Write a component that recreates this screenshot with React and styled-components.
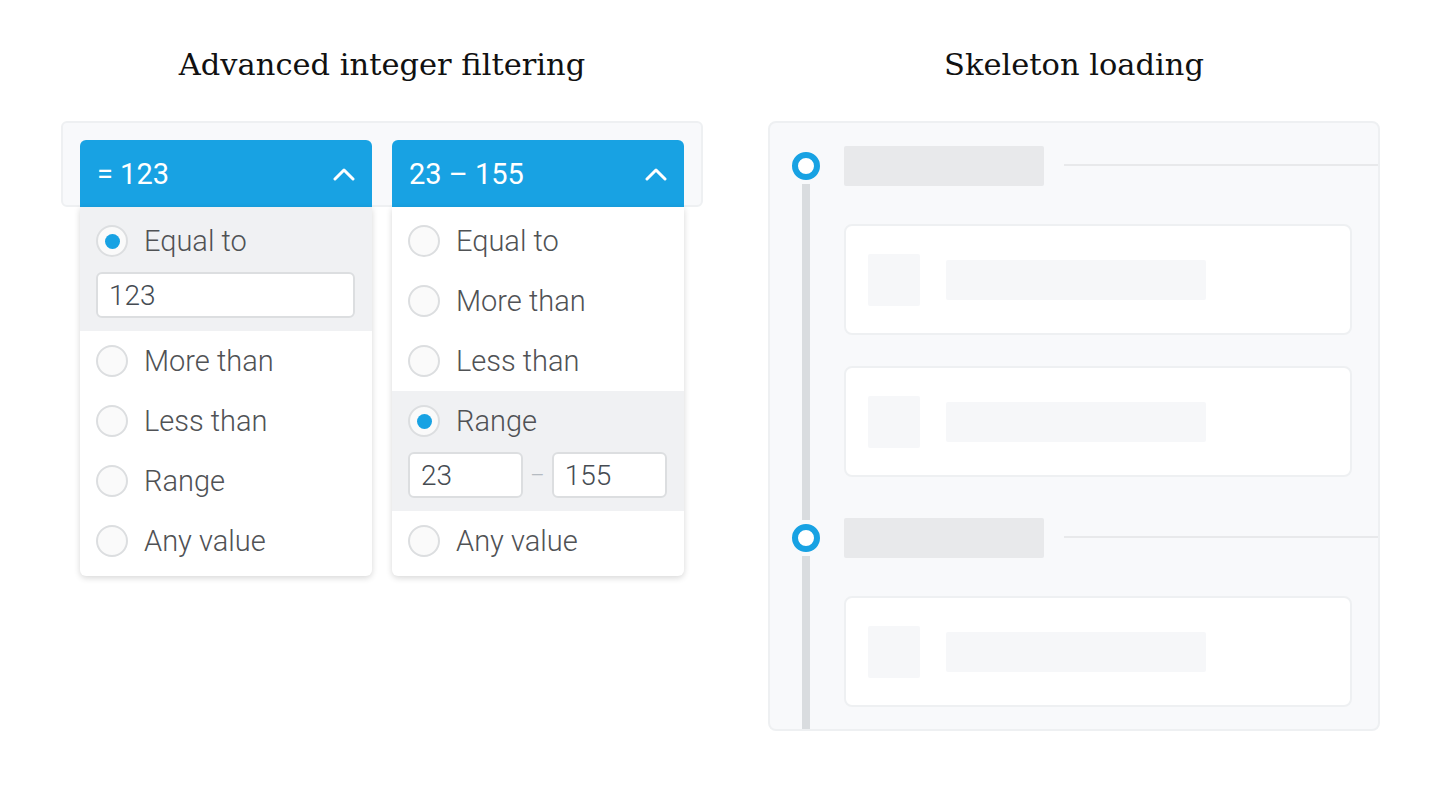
import React from 'react';
import styled, { createGlobalStyle } from 'styled-components';

const BLUE = '#18a2e3';

const GlobalStyle = createGlobalStyle`
  body {
    margin: 0;
    background: #fff;
    font-family: Roboto, "Liberation Sans", sans-serif;
  }
  * { box-sizing: border-box; }
`;

const filters = [
  {
    label: '= 123',
    active: 'equal',
    options: [
      { key: 'equal', text: 'Equal to', values: ['123'] },
      { key: 'more', text: 'More than' },
      { key: 'less', text: 'Less than' },
      { key: 'range', text: 'Range' },
      { key: 'any', text: 'Any value' },
    ],
  },
  {
    label: '23 – 155',
    active: 'range',
    options: [
      { key: 'equal', text: 'Equal to' },
      { key: 'more', text: 'More than' },
      { key: 'less', text: 'Less than' },
      { key: 'range', text: 'Range', values: ['23', '155'] },
      { key: 'any', text: 'Any value' },
    ],
  },
];

const Chevron = () => (
  <svg width="22" height="14" viewBox="0 0 22 14">
    <polyline points="2,12 11,3 20,12" fill="none" stroke="#fff" strokeWidth="3" strokeLinecap="round" strokeLinejoin="round" />
  </svg>
);

const Dropdown = ({ filter }) => (
  <DropWrap>
    <DropHeader>
      <span>{filter.label}</span>
      <Chevron />
    </DropHeader>
    <List>
      {filter.options.map((o, i) => {
        const on = o.key === filter.active;
        return (
          <Option key={o.key} $active={on} $first={i === 0}>
            <OptionRow>
              <Radio $checked={on} />
              <span>{o.text}</span>
            </OptionRow>
            {on && o.values && (
              <Inputs>
                {o.values.map((v, j) => (
                  <React.Fragment key={j}>
                    {j > 0 && <Dash>–</Dash>}
                    <Field>{v}</Field>
                  </React.Fragment>
                ))}
              </Inputs>
            )}
          </Option>
        );
      })}
    </List>
  </DropWrap>
);

// first group has no rail above its dot
const TimelineGroup = ({ first, cards }) => (
  <Group>
    <Rail>
      <RailTop $first={first} />
      <Dot />
      <RailLine />
    </Rail>
    <GroupBody $first={first}>
      <HeadRow>
        <HeadBar />
        <HeadRule />
      </HeadRow>
      <Cards>
        {Array.from({ length: cards }).map((_, i) => (
          <Card key={i}>
            <Thumb />
            <LineBar />
          </Card>
        ))}
      </Cards>
    </GroupBody>
  </Group>
);

const App = () => (
  <>
    <GlobalStyle />
    <Page>
      <Column $w={642}>
        <Title>Advanced integer filtering</Title>
        <FilterBar>
          {filters.map((f, i) => (
            <Dropdown key={i} filter={f} />
          ))}
        </FilterBar>
      </Column>
      <Column $w={612}>
        <Title>Skeleton loading</Title>
        <SkeletonPanel>
          <TimelineGroup first cards={2} />
          <TimelineGroup cards={1} />
        </SkeletonPanel>
      </Column>
    </Page>
  </>
);

export default App;

const Page = styled.div`
  display: flex;
  align-items: flex-start;
  gap: 65px;
  padding: 45px 0 0 61px;
  height: 800px;
`;

const Column = styled.div`
  width: ${(p) => p.$w}px;
  display: flex;
  flex-direction: column;
`;

const Title = styled.h1`
  margin: 0 0 36px;
  height: 40px;
  line-height: 40px;
  text-align: center;
  font-family: "DejaVu Serif", "Liberation Serif", serif;
  font-weight: 400;
  font-size: 30.5px;
  color: #111;
`;

const FilterBar = styled.div`
  height: 86px;
  display: flex;
  align-items: flex-start;
  gap: 20px;
  padding: 17px 17px 0;
  background: #f8f9fb;
  border: 2px solid #eef0f2;
  border-radius: 6px;
`;

const DropWrap = styled.div`
  width: 292px;
  flex: none;
  position: relative;
  z-index: 1;
`;

const DropHeader = styled.div`
  height: 67px;
  display: flex;
  align-items: center;
  justify-content: space-between;
  padding: 0 17px 0 17px;
  background: ${BLUE};
  border-radius: 6px 6px 0 0;
  color: #fff;
  font-size: 29px;
  font-weight: 400;
`;

const List = styled.div`
  background: #fff;
  padding: 4px 0 5px;
  border-radius: 0 0 6px 6px;
  box-shadow: 0 2px 6px rgba(0, 0, 0, 0.16);
`;

const Option = styled.div`
  background: ${(p) => (p.$active ? '#f0f1f3' : 'transparent')};
  padding-bottom: ${(p) => (p.$active ? '13px' : '0')};
  ${(p) => p.$active && p.$first && 'margin-top: -4px; padding-top: 4px;'}
`;

const OptionRow = styled.div`
  height: 60px;
  display: flex;
  align-items: center;
  gap: 16px;
  padding-left: 16px;
  font-size: 29px;
  font-weight: 300;
  color: #505255;
`;

const Radio = styled.div`
  width: 32px;
  height: 32px;
  flex: none;
  border-radius: 50%;
  border: 2px solid #dcdee0;
  background: #fafafa;
  display: flex;
  align-items: center;
  justify-content: center;

  &::after {
    content: '';
    display: ${(p) => (p.$checked ? 'block' : 'none')};
    width: 15px;
    height: 15px;
    border-radius: 50%;
    background: ${BLUE};
  }
`;

const Inputs = styled.div`
  display: flex;
  align-items: center;
  gap: 7px;
  margin-top: 1px;
  padding: 0 17px 0 16px;
`;

const Field = styled.div`
  flex: 1;
  height: 46px;
  display: flex;
  align-items: center;
  padding-left: 11px;
  background: #fff;
  border: 2px solid #dcdee0;
  border-radius: 6px;
  font-size: 28px;
  font-weight: 300;
  color: #454b52;
`;

const Dash = styled.span`
  font-size: 22px;
  color: #b5bbc1;
  font-weight: 300;
`;

const SkeletonPanel = styled.div`
  height: 610px;
  background: #f8f9fb;
  border: 2px solid #eef0f2;
  border-radius: 8px;
  overflow: hidden;
  display: flex;
  flex-direction: column;
`;

const Group = styled.div`
  display: flex;
  &:last-child { flex: 1; }
`;

const Rail = styled.div`
  width: 74px;
  flex: none;
  display: flex;
  flex-direction: column;
  align-items: center;
  padding-right: 2px;
`;

const RailLine = styled.div`
  width: 8px;
  flex: 1;
  background: #d9dcdf;
`;

const RailTop = styled.div`
  width: 8px;
  height: ${(p) => (p.$first ? '25px' : '2px')};
  background: ${(p) => (p.$first ? 'transparent' : '#d9dcdf')};
`;

const Dot = styled.div`
  width: 28px;
  height: 28px;
  flex: none;
  margin: 4px 0;
  border-radius: 50%;
  border: 6px solid ${BLUE};
  background: #fff;
`;

const GroupBody = styled.div`
  flex: 1;
  padding: ${(p) => (p.$first ? '23px 0 41px' : '0 0 24px')};
`;

const HeadRow = styled.div`
  display: flex;
  align-items: center;
  height: 40px;
`;

const HeadBar = styled.div`
  width: 200px;
  height: 40px;
  background: #e8e9eb;
  border-radius: 2px;
`;

const HeadRule = styled.div`
  flex: 1;
  height: 2px;
  margin-left: 20px;
  margin-top: -2px;
  background: #e8e9eb;
`;

const Cards = styled.div`
  display: flex;
  flex-direction: column;
  gap: 31px;
  margin-top: 38px;
  margin-right: 26px;
`;

const Card = styled.div`
  height: 111px;
  display: flex;
  align-items: center;
  gap: 26px;
  padding-left: 22px;
  background: #fff;
  border: 2px solid #eef0f2;
  border-radius: 8px;
`;

const Thumb = styled.div`
  width: 52px;
  height: 52px;
  background: #f6f7f9;
  border-radius: 2px;
`;

const LineBar = styled.div`
  width: 260px;
  height: 40px;
  background: #f6f7f9;
  border-radius: 2px;
`;
